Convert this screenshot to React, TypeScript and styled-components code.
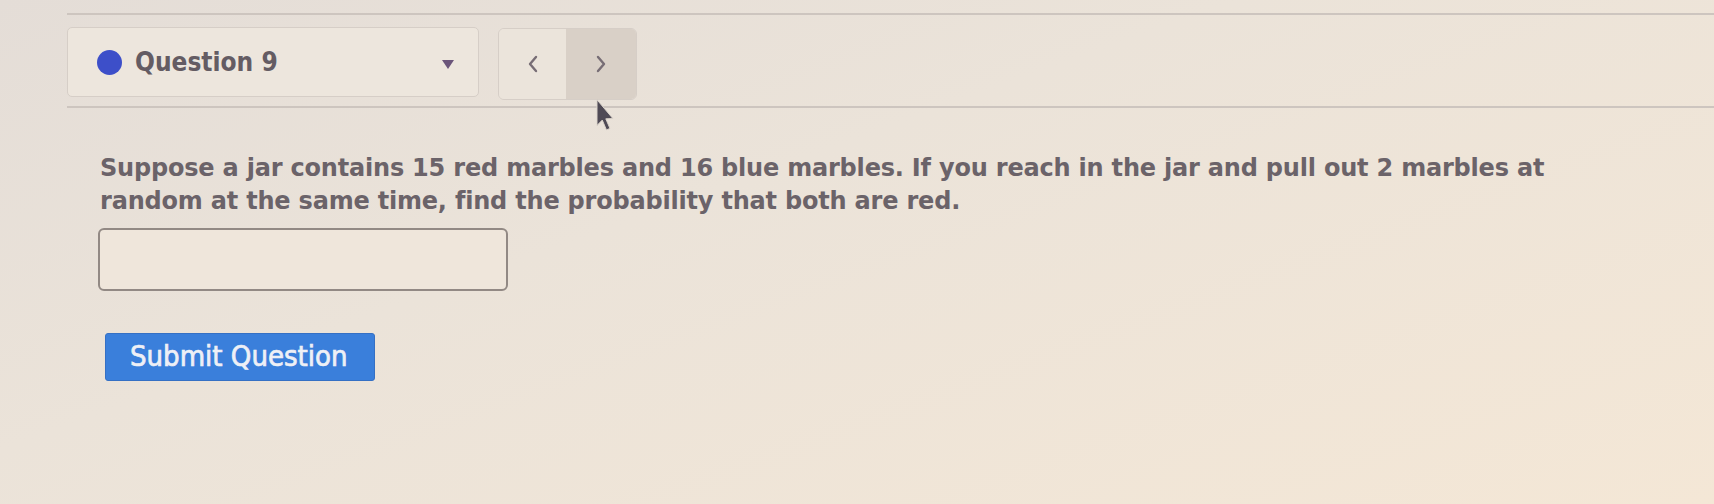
import styled, { createGlobalStyle } from 'styled-components';

const GlobalStyle = createGlobalStyle`
  html, body {
    margin: 0;
    padding: 0;
  }
  body {
    font-family: "DejaVu Sans Condensed", "DejaVu Sans", sans-serif;
    background: #ebe3da;
  }
`;

const Page = styled.div`
  min-height: 504px;
  box-sizing: border-box;
  padding: 13px 0 0 67px;
  background: linear-gradient(160deg, #e4ddd7 0%, #ebe3d9 40%, #f4e7d6 100%);
  overflow: hidden;
`;

const Rule = styled.div`
  height: 0;
  border-top: 2px solid #cdc5bf;
`;

const Header = styled.div`
  display: flex;
  align-items: flex-start;
  gap: 19px;
  margin: 12px 0 6px;
`;

const QuestionSelect = styled.div`
  width: 412px;
  height: 70px;
  box-sizing: border-box;
  display: flex;
  align-items: center;
  padding: 0 24px 0 29px;
  border: 1.5px solid #d6cec7;
  border-radius: 5px;
  background: #ede6dd;
`;

const StatusDot = styled.span`
  width: 25px;
  height: 25px;
  border-radius: 50%;
  background: #3d4fc9;
  flex-shrink: 0;
`;

const QuestionLabel = styled.span`
  margin-left: 13px;
  flex: 1;
  font-size: 26px;
  font-weight: 700;
  color: #645c63;
`;

const Caret = styled.span`
  width: 0;
  height: 0;
  border-left: 6px solid transparent;
  border-right: 6px solid transparent;
  border-top: 9px solid #6b557a;
  margin-top: 4px;
`;

const NavGroup = styled.div`
  position: relative;
  display: flex;
  box-sizing: border-box;
  margin-top: 1px;
  height: 72px;
  border: 1.5px solid #d6cec7;
  border-radius: 6px;
`;

const NavButton = styled.button<{ $hover?: boolean }>`
  width: ${(p) => (p.$hover ? 70 : 67)}px;
  height: 100%;
  border: none;
  padding: 0;
  display: flex;
  align-items: center;
  justify-content: center;
  background: ${(p) => (p.$hover ? '#d9d0c7' : '#ebe4db')};
  border-radius: ${(p) => (p.$hover ? '0 5px 5px 0' : '5px 0 0 5px')};
  cursor: pointer;
`;

const Cursor = styled.svg`
  position: absolute;
  left: 97px;
  top: 70px;
`;

const Content = styled.div`
  padding-left: 33px;
`;

const Prompt = styled.p`
  width: 1480px;
  margin: 44px 0 0;
  font-family: "DejaVu Sans", sans-serif;
  font-size: 24px;
  line-height: 33px;
  font-weight: 700;
  color: #6b6369;
  letter-spacing: -0.2px;
`;

const AnswerBox = styled.input`
  display: block;
  width: 410px;
  height: 63px;
  box-sizing: border-box;
  margin: 10px 0 0 -2px;
  border: 2px solid #928984;
  border-radius: 6px;
  background: #efe6db;
  outline: none;
`;

const SubmitButton = styled.button`
  display: block;
  margin: 42px 0 0 5px;
  width: 270px;
  height: 48px;
  border: 1px solid #3570c4;
  border-radius: 3px;
  background: #3a7fdb;
  color: #eef0f6;
  font-family: "DejaVu Sans Condensed", "DejaVu Sans", sans-serif;
  font-size: 29px;
  text-align: left;
  padding: 0 0 2px 24px;
  white-space: nowrap;
  -webkit-text-stroke: 0.7px #eef0f6;
`;

const Chevron = ({ dir }: { dir: 'left' | 'right' }) => (
  <svg width="14" height="20" viewBox="0 0 14 20">
    <path
      d={dir === 'left' ? 'M10 3 L4 10 L10 17' : 'M4 3 L10 10 L4 17'}
      fill="none"
      stroke="#776d75"
      strokeWidth="2.4"
      strokeLinecap="round"
      strokeLinejoin="round"
    />
  </svg>
);

export default function App() {
  return (
    <>
      <GlobalStyle />
      <Page>
        <Rule />
        <Header>
          <QuestionSelect>
            <StatusDot />
            <QuestionLabel>Question 9</QuestionLabel>
            <Caret />
          </QuestionSelect>
          <NavGroup>
            <NavButton aria-label="Previous question">
              <Chevron dir="left" />
            </NavButton>
            <NavButton $hover aria-label="Next question">
              <Chevron dir="right" />
            </NavButton>
            <Cursor width="18" height="32" viewBox="0 0 11 20">
              <path
                d="M0.5 0.5 L0.5 16.5 L3.8 13.2 L6.4 19.3 L8.6 18.4 L6 12.4 L10.4 12.2 Z"
                fill="#4f4a55"
                stroke="#ddd5cc"
                strokeWidth="0.6"
              />
            </Cursor>
          </NavGroup>
        </Header>
        <Rule />
        <Content>
          <Prompt>
            Suppose a jar contains 15 red marbles and 16 blue marbles. If you reach in the jar and pull out 2 marbles at random at the same time, find the probability that both are red.
          </Prompt>
          <AnswerBox type="text" />
          <SubmitButton>Submit Question</SubmitButton>
        </Content>
      </Page>
    </>
  );
}
